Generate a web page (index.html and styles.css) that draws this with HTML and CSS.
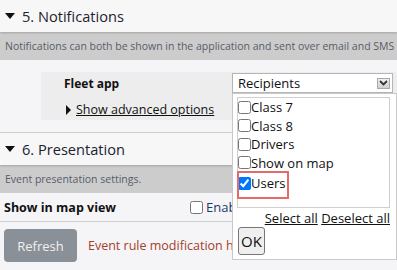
FILE: index.html
```html
<!DOCTYPE html>
<html lang="en">
<head>
    <meta charset="UTF-8">
    <meta name="viewport" content="width=device-width, initial-scale=1.0">
    <title>Event rule</title>
    <link rel="stylesheet" href="styles.css">
</head>
<body>
    <div class="page">
        <div class="section">
            <div class="section-head"><span class="caret-down"></span>5. Notifications</div>
            <div class="section-desc">Notifications can both be shown in the application and sent over email and SMS to selected recipients.</div>
            <div class="section-body">
                <div class="channel">
                    <div class="channel-row">
                        <span class="channel-name">Fleet app</span>
                        <div class="multiselect">
                            <div class="multiselect-box">
                                <span>Recipients</span>
                                <span class="multiselect-btn">
                                    <svg width="9" height="6" viewBox="0 0 9 6"><path d="M1 1l3.5 3.5L8 1" fill="none" stroke="#333" stroke-width="1.8"/></svg>
                                </span>
                            </div>
                            <div class="multiselect-popup">
                                <div class="multiselect-list">
                                    <label class="option"><input type="checkbox">Class 7</label>
                                    <label class="option"><input type="checkbox">Class 8</label>
                                    <label class="option"><input type="checkbox">Drivers</label>
                                    <label class="option"><input type="checkbox">Show on map</label>
                                    <label class="option marked"><input type="checkbox" checked>Users</label>
                                </div>
                                <div class="multiselect-links">
                                    <a href="#">Select all</a> <a href="#">Deselect all</a>
                                </div>
                                <button class="ok-btn">OK</button>
                            </div>
                        </div>
                    </div>
                    <div class="advanced"><span class="caret-right"></span><a href="#">Show advanced options</a></div>
                </div>
            </div>
        </div>

        <div class="section">
            <div class="section-head"><span class="caret-down"></span>6. Presentation</div>
            <div class="section-desc">Event presentation settings.</div>
            <div class="setting-row">
                <span class="setting-name">Show in map view</span>
                <label class="setting-value"><input type="checkbox">Enable</label>
            </div>
        </div>

        <div class="footer">
            <button class="refresh-btn">Refresh</button>
            <span class="footer-msg">Event rule modification has not been saved.</span>
        </div>
    </div>
</body>
</html>
```

FILE: styles.css
```css
body {
    margin: 0;
    font-family: 'Open Sans', 'Noto Sans', sans-serif;
    color: #222;
    background-color: #f5f5f7;
    overflow: hidden;
}
.page {
    width: 397px;
    height: 270px;
    overflow: hidden;
    position: relative;
}
.section-head {
    height: 32px;
    display: flex;
    align-items: center;
    padding-left: 5px;
    font-size: 14.6px;
    color: #1c2230;
    background-color: #f7f7f7;
    box-shadow: 0 1px 2px rgba(0,0,0,0.2);
    position: relative;
}
.caret-down {
    width: 0;
    height: 0;
    border-left: 5px solid transparent;
    border-right: 5px solid transparent;
    border-top: 6px solid #111;
    margin-right: 7px;
}
.caret-right {
    display: inline-block;
    width: 0;
    height: 0;
    border-top: 5px solid transparent;
    border-bottom: 5px solid transparent;
    border-left: 5px solid #111;
    margin-right: 5px;
}
.section-desc {
    height: 28px;
    line-height: 28px;
    padding-left: 5px;
    font-size: 10.5px;
    color: #575d68;
    background-color: #cccccc;
    white-space: nowrap;
}
.section-body {
    padding: 12px 0;
    border-bottom: 1px solid #cfcfcf;
}
.channel {
    margin-left: 41px;
    height: 48px;
    padding-left: 23px;
    background-color: #ededed;
}
.channel-row {
    display: flex;
    align-items: center;
    padding-top: 1px;
}
.channel-name {
    width: 168px;
    flex-shrink: 0;
    font-size: 12px;
    font-weight: bold;
    color: #111;
}
.multiselect {
    position: relative;
    z-index: 5;
}
.multiselect-box {
    width: 159px;
    height: 18px;
    border: 1px solid #b5b5b5;
    background: white;
    display: flex;
    align-items: center;
    justify-content: space-between;
    font-size: 13px;
    color: #111;
}
.multiselect-box span:first-child {
    padding-left: 5px;
}
.multiselect-btn {
    width: 11px;
    height: 9px;
    margin-right: 2px;
    border: 1px solid #a8a8a8;
    background: linear-gradient(#f0f0f0, #cfcfcf);
    display: flex;
    align-items: center;
    justify-content: center;
}
.multiselect-popup {
    position: absolute;
    top: 20px;
    left: 0;
    width: 153px;
    height: 161px;
    padding: 3px 6px 1px 4px;
    background: white;
    border: 1px solid #c8c8c8;
}
.multiselect-list {
    height: 109px;
    border: 1px solid #cfcfcf;
    display: flex;
    flex-direction: column;
    align-items: flex-start;
}
.option {
    display: flex;
    align-items: center;
    height: 18.5px;
    font-size: 13px;
    color: #111;
    white-space: nowrap;
}
.option input {
    margin: 0;
    width: 13px;
    height: 13px;
}
.option.marked {
    height: 22px;
    padding: 2px 3px 2px 0;
    align-items: flex-start;
    line-height: 18px;
    outline: 2px solid #e56b6b;
    outline-offset: -1px;
}
.option.marked input {
    margin-top: 3px;
}
.multiselect-links {
    text-align: right;
    font-size: 13px;
    line-height: 18px;
    margin-top: 1px;
}
.multiselect-links a {
    color: #111;
}
.ok-btn {
    margin-left: 1px;
    height: 28px;
    padding: 0 2px;
    font-family: inherit;
    font-size: 15px;
    color: #111;
    background-color: #efefef;
    border: 1px solid #767676;
    border-radius: 3px;
}
.advanced {
    display: flex;
    align-items: center;
    padding-top: 8px;
    padding-left: 2px;
    font-size: 12.5px;
}
.advanced a {
    color: #111;
}
.setting-row {
    height: 28px;
    display: flex;
    align-items: center;
    padding-left: 4px;
    border-bottom: 1px solid #cfcfcf;
}
.setting-name {
    width: 186px;
    font-size: 12.5px;
    font-weight: bold;
    color: #111;
}
.setting-value {
    display: flex;
    align-items: center;
    font-size: 13px;
    color: #1a3a6a;
}
.setting-value input {
    margin: 0 3px 0 0;
    width: 13px;
    height: 13px;
}
.footer {
    display: flex;
    align-items: center;
    padding: 7px 4px;
}
.refresh-btn {
    width: 73px;
    height: 33px;
    font-family: inherit;
    font-size: 13px;
    color: #f0f0f0;
    background-color: #8a9097;
    border: none;
    border-radius: 4px;
    margin-right: 11px;
}
.footer-msg {
    font-size: 12.5px;
    color: #a3402e;
    white-space: nowrap;
}
```
